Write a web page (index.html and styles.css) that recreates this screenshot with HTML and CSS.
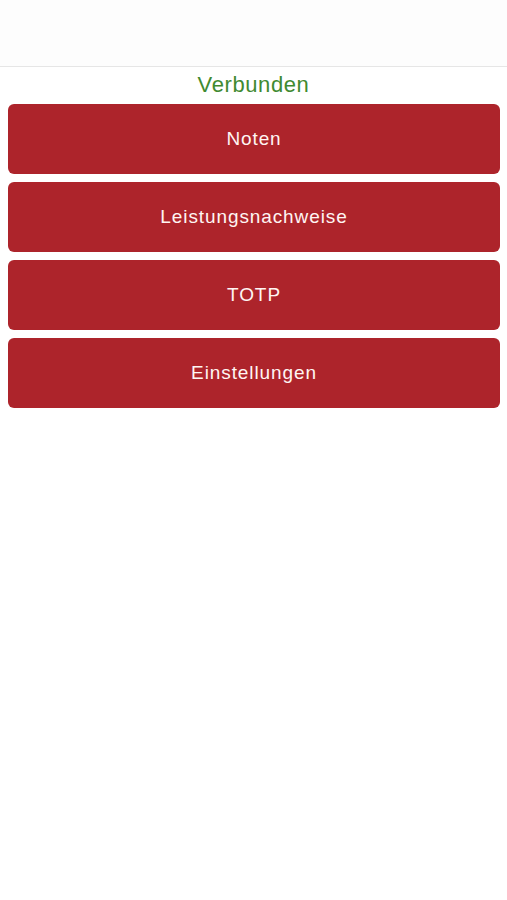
FILE: index.html
```html
<!DOCTYPE html>
<html lang="de">
<head>
  <meta charset="UTF-8">
  <meta name="viewport" content="width=device-width, initial-scale=1.0">
  <title>Verbunden</title>
  <link rel="stylesheet" href="styles.css">
</head>
<body>

  <!-- Top bar -->
  <header class="top-bar"></header>

  <p class="status">Verbunden</p>

  <!-- Menu -->
  <nav class="menu">
    <button class="menu-button">Noten</button>
    <button class="menu-button">Leistungsnachweise</button>
    <button class="menu-button">TOTP</button>
    <button class="menu-button">Einstellungen</button>
  </nav>

</body>
</html>
```

FILE: styles.css
```css
:root {
  --main-color: #ad242b;
  --status-color: #3f8a30;
  --text-color: #fff5f3;
  --line-color: #e6e6e6;
}

html, body {
  margin: 0;
  padding: 0;
  font-family: 'Liberation Sans', Arial, sans-serif;
  background-color: #ffffff;
}

.top-bar {
  height: 66px;
  background-color: #fdfdfd;
  border-bottom: 1px solid var(--line-color);
}

.status {
  margin: 0;
  padding: 3px 0 4px;
  text-align: center;
  font-size: 22px;
  line-height: 30px;
  letter-spacing: 0.6px;
  color: var(--status-color);
}

.menu {
  display: flex;
  flex-direction: column;
  gap: 8px;
  padding: 0 7px 0 8px;
}

.menu-button {
  display: block;
  width: 100%;
  height: 70px;
  border: none;
  border-radius: 6px;
  background-color: var(--main-color);
  color: var(--text-color);
  font-family: inherit;
  font-size: 19px;
  letter-spacing: 0.9px;
  cursor: pointer;
}
```
